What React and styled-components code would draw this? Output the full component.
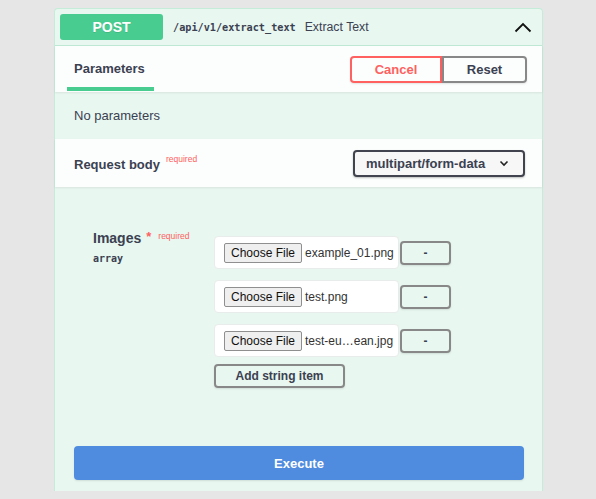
import React from "react";
import styled, { createGlobalStyle } from "styled-components";

const GlobalStyle = createGlobalStyle`
  body {
    margin: 0;
    background: #e6e6e6;
    font-family: "Liberation Sans", Arial, sans-serif;
    color: #3b4151;
  }
`;

const Page = styled.div`
  padding: 8px 0 0 54px;
  height: 491px;
  box-sizing: border-box;
`;

const Opblock = styled.div`
  width: 489px;
  height: 483px;
  box-sizing: border-box;
  border: 1px solid #c4ecd9;
  border-bottom: none;
  border-radius: 4px 4px 0 0;
  background: #e8f7f0;
  display: flex;
  flex-direction: column;
`;

const Summary = styled.div`
  height: 36px;
  display: flex;
  align-items: center;
  padding: 0 0 0 5px;
  border-bottom: 1px solid #bfe8d5;
`;

const Method = styled.div`
  width: 103px;
  height: 26px;
  border-radius: 3px;
  background: #49cc90;
  color: #fff;
  font-weight: 700;
  font-size: 14px;
  display: flex;
  align-items: center;
  justify-content: center;
  text-shadow: 0 1px 0 rgba(0, 0, 0, 0.1);
`;

const Path = styled.span`
  margin-left: 10px;
  font-family: "DejaVu Sans Mono", monospace;
  font-weight: 700;
  font-size: 10.2px;
  color: #3b4151;
`;

const Description = styled.span`
  margin-left: 9px;
  font-size: 12.3px;
  color: #3b4151;
  flex: 1;
`;

const Chevron = styled.svg`
  width: 20px;
  height: 20px;
  margin-right: 9px;
`;

const SectionHeader = styled.div`
  height: ${(p) => p.$h}px;
  background: rgba(255, 255, 255, 0.85);
  box-shadow: 0 1px 2px rgba(0, 0, 0, 0.08);
  display: flex;
  align-items: center;
  padding: 0 ${(p) => p.$pr || 17}px 0 ${(p) => p.$pl || 19}px;
`;

const Tab = styled.div`
  align-self: stretch;
  display: flex;
  align-items: center;
  padding: 4px 0 0 7px;
  font-size: 13px;
  font-weight: 700;
  border-bottom: 4px solid #49cc90;
  box-sizing: border-box;
  height: 45px;
  width: 87px;
`;

const Spacer = styled.div`
  flex: 1;
`;

const ButtonGroup = styled.div`
  display: flex;
`;

const OutlineButton = styled.button`
  height: 27px;
  width: ${(p) => p.$w}px;
  box-sizing: border-box;
  background: transparent;
  border: 2px solid ${(p) => (p.$danger ? "#ff6060" : "#888")};
  border-radius: ${(p) => p.$radius};
  color: ${(p) => (p.$danger ? "#ff6060" : "#3b4151")};
  font-family: "Liberation Sans", Arial, sans-serif;
  font-weight: 700;
  font-size: 13px;
  padding: 0;
  box-shadow: 0 1px 2px rgba(0, 0, 0, 0.1);
`;

const NoParams = styled.div`
  height: 47px;
  display: flex;
  align-items: center;
  padding-left: 19px;
  font-size: 13px;
  color: #3b4151;
`;

const SectionTitle = styled.div`
  font-size: 13px;
  font-weight: 700;
  flex: 1;
  display: flex;
  align-items: flex-start;
  padding-top: 2px;
`;

const Required = styled.span`
  color: #ff6060;
  font-size: 8.5px;
  font-weight: 400;
  margin-left: ${(p) => p.$ml || 6}px;
  margin-top: ${(p) => p.$mt || -3}px;
`;

const Select = styled.div`
  width: 172px;
  height: 27px;
  box-sizing: border-box;
  border: 2px solid #41444e;
  border-radius: 4px;
  background: #f7f7f7;
  box-shadow: 0 1px 2px rgba(0, 0, 0, 0.25);
  display: flex;
  align-items: center;
  padding: 0 14px 0 11px;
  font-size: 13px;
  font-weight: 700;
  color: #3b4151;
  justify-content: space-between;
`;

const Body = styled.div`
  flex: 1;
  display: flex;
  flex-direction: column;
  padding: 49px 18px 11px 19px;
`;

const ParamRow = styled.div`
  display: flex;
  padding-left: 19px;
`;

const ParamName = styled.div`
  width: 121px;
  margin-top: -6px;
`;

const NameLine = styled.div`
  display: flex;
  align-items: flex-start;
  font-size: 14px;
  font-weight: 700;
`;

const Star = styled.span`
  color: #ff6060;
  margin-left: 5px;
  font-size: 13px;
  margin-top: -1px;
`;

const TypeLabel = styled.div`
  font-family: "DejaVu Sans Mono", monospace;
  font-weight: 700;
  font-size: 10px;
  margin-top: 7px;
`;

const Items = styled.div`
  display: flex;
  flex-direction: column;
  gap: 11px;
`;

const ItemRow = styled.div`
  display: flex;
  align-items: center;
  gap: 1px;
`;

const FileBox = styled.div`
  width: 185px;
  height: 33px;
  box-sizing: border-box;
  background: #fff;
  border: 1px solid #e8ecea;
  border-radius: 4px;
  display: flex;
  align-items: center;
  padding-left: 9px;
  font-size: 12px;
  color: #333;
`;

const ChooseFile = styled.span`
  display: inline-flex;
  align-items: center;
  height: 18px;
  padding: 0 6px;
  border: 1px solid #8f8f8f;
  border-radius: 2px;
  background: #efefef;
  margin-right: 3px;
  font-size: 12px;
  color: #111;
`;

const RemoveButton = styled.button`
  width: 51px;
  height: 24px;
  box-sizing: border-box;
  background: transparent;
  border: 2px solid #888;
  border-radius: 4px;
  font-weight: 700;
  font-size: 12px;
  color: #3b4151;
  padding: 0;
  box-shadow: 0 1px 2px rgba(0, 0, 0, 0.1);
`;

const AddButton = styled(RemoveButton)`
  width: 131px;
  font-family: "Liberation Sans", Arial, sans-serif;
  margin-top: -4px;
`;

const Execute = styled.button`
  margin-top: auto;
  height: 34px;
  width: 100%;
  border: none;
  border-radius: 4px;
  background: #4f8ce0;
  color: #fff;
  font-family: "Liberation Sans", Arial, sans-serif;
  font-weight: 700;
  font-size: 13px;
  box-shadow: 0 1px 2px rgba(0, 0, 0, 0.1);
`;

const files = ["example_01.png", "test.png", "test-eu…ean.jpg"];

export default function App() {
  return (
    <>
      <GlobalStyle />
      <Page>
        <Opblock>
          <Summary>
            <Method>POST</Method>
            <Path>/api/v1/extract_text</Path>
            <Description>Extract Text</Description>
            <Chevron viewBox="0 0 20 20">
              <path d="M2.5 14.5 L10 7 L17.5 14.5" fill="none" stroke="#111" strokeWidth="1.8" />
            </Chevron>
          </Summary>
          <SectionHeader $h={46} $pl={12} $pr={15}>
            <Tab>Parameters</Tab>
            <Spacer />
            <ButtonGroup>
              <OutlineButton $danger $w={92} $radius="4px 0 0 4px">Cancel</OutlineButton>
              <OutlineButton $w={85} $radius="0 4px 4px 0">Reset</OutlineButton>
            </ButtonGroup>
          </SectionHeader>
          <NoParams>No parameters</NoParams>
          <SectionHeader $h={48}>
            <SectionTitle>
              Request body<Required $mt={-3}>required</Required>
            </SectionTitle>
            <Select>
              multipart/form-data
              <svg width="10" height="7" viewBox="0 0 10 7">
                <path d="M1.5 1.5 L5 5 L8.5 1.5" fill="none" stroke="#222" strokeWidth="1.6" />
              </svg>
            </Select>
          </SectionHeader>
          <Body>
            <ParamRow>
              <ParamName>
                <NameLine>
                  Images<Star>*</Star>
                  <Required $ml={7} $mt={1}>required</Required>
                </NameLine>
                <TypeLabel>array</TypeLabel>
              </ParamName>
              <Items>
                {files.map((f) => (
                  <ItemRow key={f}>
                    <FileBox>
                      <ChooseFile>Choose File</ChooseFile>
                      {f}
                    </FileBox>
                    <RemoveButton>-</RemoveButton>
                  </ItemRow>
                ))}
                <ItemRow>
                  <AddButton>Add string item</AddButton>
                </ItemRow>
              </Items>
            </ParamRow>
            <Execute>Execute</Execute>
          </Body>
        </Opblock>
      </Page>
    </>
  );
}
